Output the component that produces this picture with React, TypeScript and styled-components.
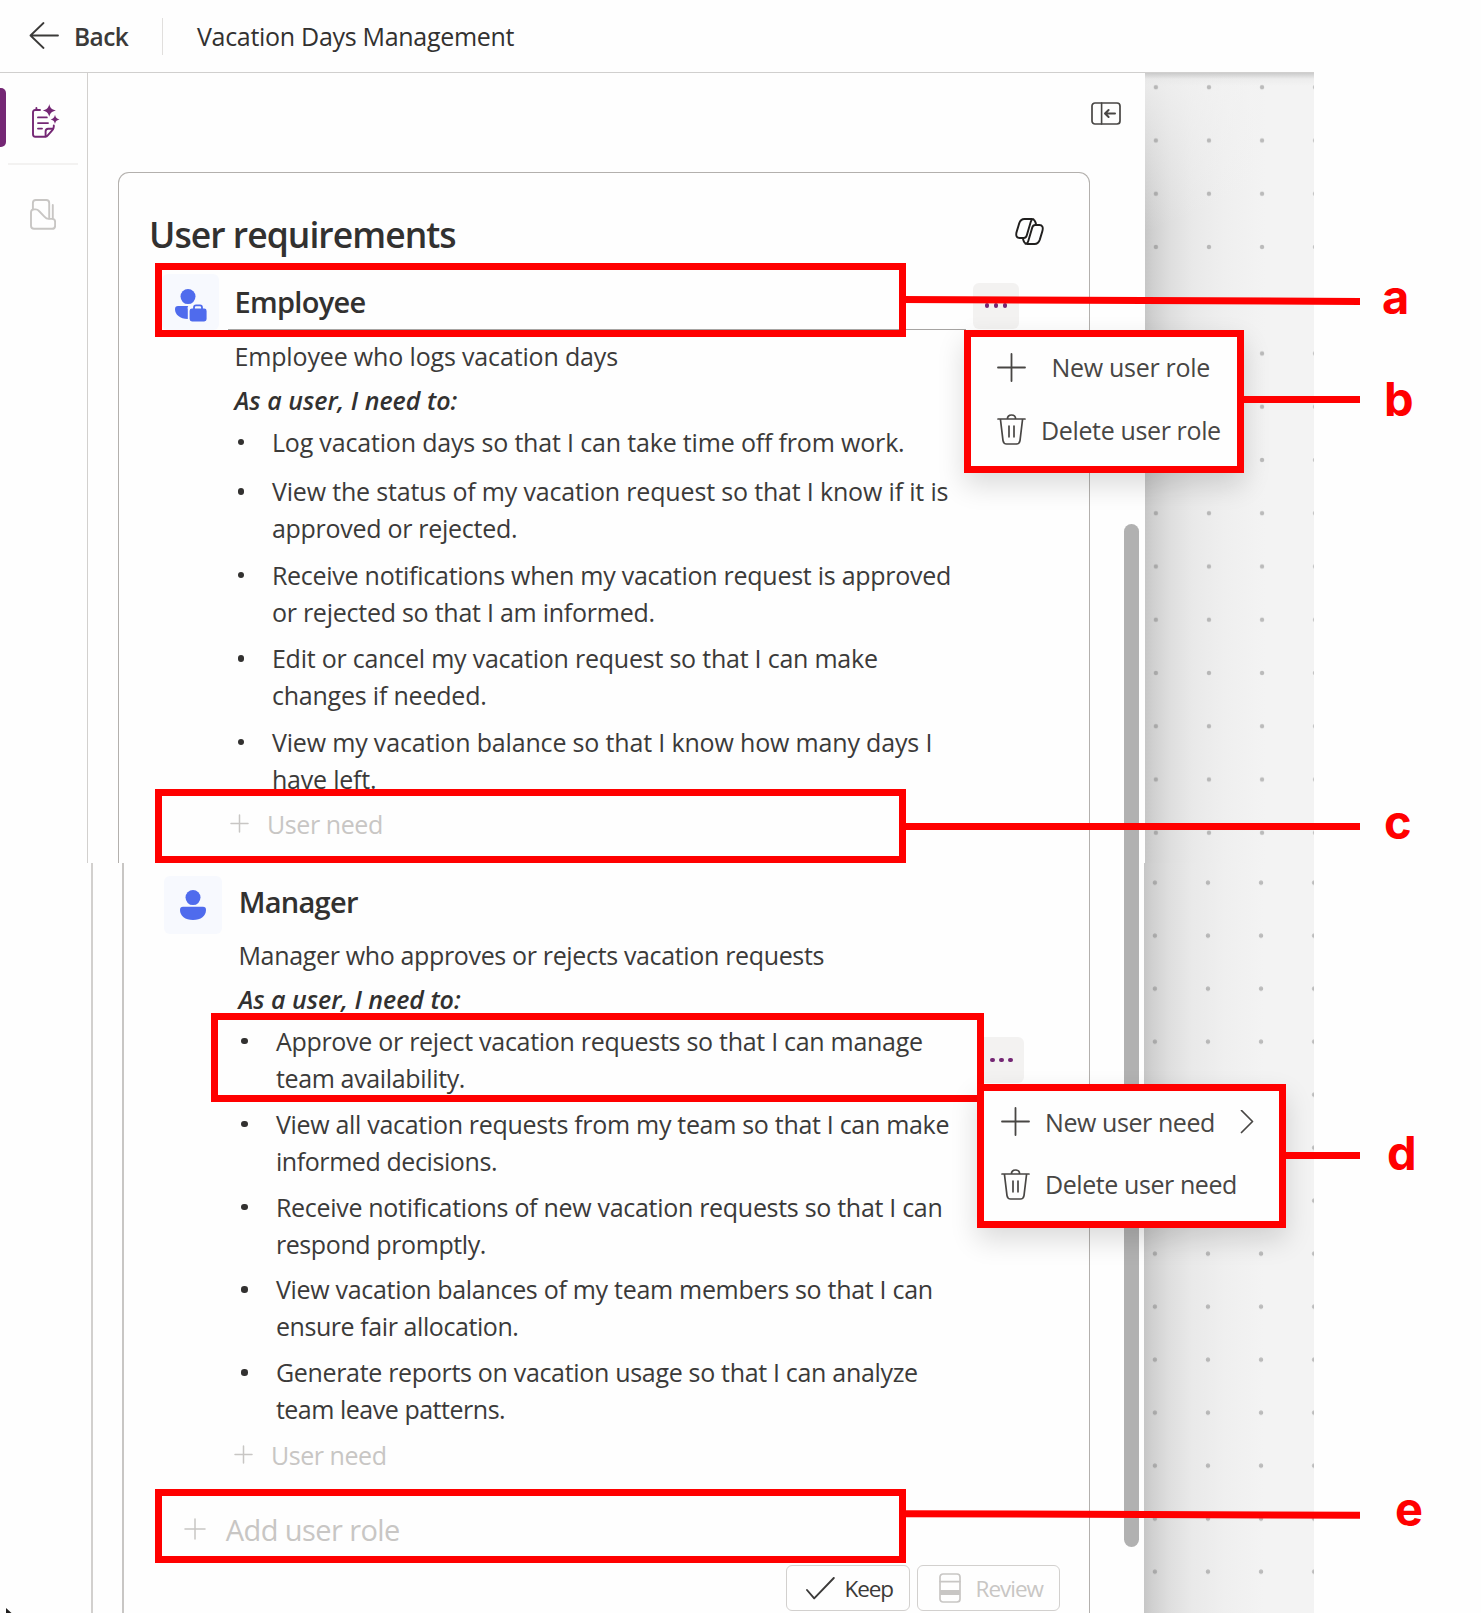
import React from 'react';
import styled, { createGlobalStyle, css } from 'styled-components';

const GlobalStyle = createGlobalStyle`
  *, *::before, *::after { box-sizing: border-box; }
  body { margin: 0; background: #fefefe; }
`;

const RED = '#ff0000';
const INK = '#3b3a39';
const MUTED = '#c8c6c4';

const Page = styled.div`
  position: relative;
  width: 1481px;
  height: 1613px;
  overflow: hidden;
  background: #fefefe;
  color: ${INK};
  font-family: 'Open Sans', 'Noto Sans', sans-serif;
  font-size: 25px;
`;

/* ---------- text ---------- */

const Text = styled.span<{ $track?: number }>`
  display: block;
  white-space: nowrap;
  letter-spacing: ${(p) => p.$track ?? -0.25}px;
`;

/* ---------- header ---------- */

const Header = styled.header`
  display: flex;
  align-items: center;
  width: 1314px;
  height: 73px;
  padding-left: 29px;
  border-bottom: 1px solid #d0cfce;
`;

const BackButton = styled.div`
  display: flex;
  align-items: center;
  gap: 15px;
  width: 133px;
  font-size: 24.5px;
  font-weight: 600;
`;

const HeaderRule = styled.div`
  width: 1px;
  height: 37px;
  margin-right: 34px;
  background: #e1dfdd;
`;

const AppTitle = styled.div`
  color: #323130;
`;

/* ---------- workspace ---------- */

const Slice = styled.section<{ $height: number }>`
  display: flex;
  height: ${(p) => p.$height}px;
`;

const Rail = styled.nav<{ $width: number; $line: number }>`
  flex: none;
  width: ${(p) => p.$width}px;
  border-right: ${(p) => p.$line}px solid #d2d0ce;
`;

const RailItem = styled.div<{ $top: number; $height: number; $pad: number }>`
  display: flex;
  align-items: center;
  gap: 26px;
  height: ${(p) => p.$height}px;
  margin-top: ${(p) => p.$top}px;
  padding-left: ${(p) => p.$pad}px;
`;

const ActiveMark = styled.div`
  width: 6px;
  height: 59px;
  border-radius: 0 5px 5px 0;
  background: #742774;
`;

const RailIcon = styled.div`
  padding-top: 6px;
  line-height: 0;
`;

const RailRule = styled.div`
  width: 70px;
  height: 2px;
  margin: 16px 0 0 8px;
  background: #f3f2f1;
`;

const Panel = styled.div<{ $width: number; $left: number }>`
  flex: none;
  display: flex;
  flex-direction: column;
  width: ${(p) => p.$width}px;
  padding-left: ${(p) => p.$left}px;
`;

const PanelBar = styled.div`
  display: flex;
  justify-content: flex-end;
  flex: none;
  height: 99px;
  padding: 28.5px 24px 0 0;
`;

const Card = styled.div<{ $lower?: boolean }>`
  flex: 1;
  display: flex;
  flex-direction: column;
  border: 1px solid #b3b0ad;
  border-bottom: 0;
  ${(p) =>
    p.$lower
      ? css`
          width: 968px;
          border-top: 0;
          border-left: 2px solid #c8c6c4;
        `
      : css`
          width: 972px;
          border-radius: 11px 11px 0 0;
          padding-top: 35px;
        `}
`;

const TitleRow = styled.div`
  display: flex;
  justify-content: space-between;
  align-items: flex-start;
  height: 66px;
  padding: 0 45px 0 30px;
`;

const Title = styled.h1`
  margin: 0;
  padding-top: 2px;
  font-size: 35.5px;
  font-weight: 600;
  line-height: 48px;
  color: #323130;
`;

const TitleIcon = styled.div`
  padding-top: 10px;
  line-height: 0;
`;

/* ---------- role sections ---------- */

const Role = styled.div<{ $left: number; $top?: number }>`
  padding: ${(p) => p.$top ?? 0}px 0 0 ${(p) => p.$left}px;
`;

const RoleHead = styled.div<{ $height: number }>`
  display: flex;
  height: ${(p) => p.$height}px;
`;

const Avatar = styled.div<{ $width: number; $drop?: number }>`
  flex: none;
  display: flex;
  align-items: center;
  justify-content: center;
  width: ${(p) => p.$width}px;
  padding-top: ${(p) => p.$drop ?? 0}px;
  border-radius: 6px;
  background: #f7f9fe;
`;

const NameField = styled.div<{ $left: number; $lined?: boolean }>`
  width: 738px;
  margin-left: ${(p) => p.$left}px;
  padding: ${(p) => (p.$lined ? '9px 0 0 7px' : '7px 0 0 7px')};
  border-bottom: ${(p) => (p.$lined ? '1px solid #a6a4a2' : '0')};
  font-size: 29px;
  font-weight: 600;
  line-height: 38px;
  color: #323130;
`;

const MoreButton = styled.div<{ $left: number; $top: number }>`
  flex: none;
  display: flex;
  align-items: center;
  justify-content: center;
  gap: 4.5px;
  width: 46px;
  height: 46px;
  margin: ${(p) => p.$top}px 0 0 ${(p) => p.$left}px;
  border-radius: 6px;
  background: #f3f2f1;
`;

const MoreDot = styled.i`
  width: 4.6px;
  height: 4.6px;
  border-radius: 50%;
  background: #742774;
`;

const RoleBody = styled.div<{ $left: number; $top: number }>`
  padding: ${(p) => p.$top}px 0 0 ${(p) => p.$left}px;
`;

const Description = styled.div`
  line-height: 34px;
`;

const Lead = styled.div`
  margin-top: 10px;
  font-style: italic;
  font-weight: 600;
  line-height: 34px;
  color: #323130;
`;

const NeedList = styled.ul<{ $gap: number }>`
  display: flex;
  flex-direction: column;
  gap: ${(p) => p.$gap}px;
  margin: 7px 0 0;
  padding: 0;
  list-style: none;
`;

const NeedItem = styled.li<{ $after?: number }>`
  display: flex;
  align-items: flex-start;
  margin-bottom: ${(p) => p.$after ?? 0}px;
  padding-left: 3px;
  line-height: 37px;

  &::before {
    content: '';
    flex: none;
    width: 6.4px;
    height: 6.4px;
    margin: 15px 28px 0 0;
    border-radius: 50%;
    background: #323130;
  }
`;

const NeedText = styled.div`
  width: 702px;
`;

const AddRow = styled.div<{ $top: number; $left: number; $gap: number; $large?: boolean }>`
  display: flex;
  align-items: center;
  gap: ${(p) => p.$gap}px;
  margin: ${(p) => p.$top}px 0 0 ${(p) => p.$left}px;
  color: ${MUTED};
  font-size: ${(p) => (p.$large ? 29 : 25)}px;
  line-height: ${(p) => (p.$large ? 40 : 34)}px;

  svg {
    margin-top: -1px;
  }
`;

const Footer = styled.div`
  display: flex;
  justify-content: flex-end;
  gap: 7px;
  margin-top: 15px;
  padding-right: 29.5px;
`;

const FooterButton = styled.div<{ $width: number; $left: number; $gap: number; $disabled?: boolean }>`
  display: flex;
  align-items: center;
  gap: ${(p) => p.$gap}px;
  width: ${(p) => p.$width}px;
  height: 46px;
  padding: 1px 0 0 ${(p) => p.$left}px;
  border: 1px solid #d2d0ce;
  border-radius: 6px;
  color: ${(p) => (p.$disabled ? MUTED : INK)};
  font-size: 22.5px;
`;

/* ---------- canvas ---------- */

const Canvas = styled.div<{ $width: number; $y: number; $pitch: number; $top?: boolean }>`
  flex: none;
  width: ${(p) => p.$width}px;
  background:
    ${(p) => (p.$top ? 'linear-gradient(180deg, rgba(190,190,190,.75) 0, rgba(225,225,225,.35) 6px, transparent 13px),' : '')}
    radial-gradient(circle, rgba(110,110,110,.42) 0 1.8px, transparent 2.6px) -15.7px ${(p) => p.$y}px / 53.1px ${(p) => p.$pitch}px,
    ${(p) => (p.$top ? 'linear-gradient(160deg, rgba(243,243,243,.85) 0, rgba(243,243,243,0) 150px),' : '')}
    linear-gradient(90deg, #c6c6c6 0, #d0d0d0 8px, #dedede 25px, #e9e9e9 48px, #efefef 80px, #f3f3f3 120px);
`;

const ScrollThumb = styled.div`
  position: absolute;
  left: 1124px;
  top: 524px;
  width: 15px;
  height: 1023px;
  border-radius: 8px;
  background: #b1b1b1;
`;

/* ---------- menus ---------- */

const Menu = styled.div<{ $x: number; $y: number; $w: number; $h: number; $pad: string }>`
  position: absolute;
  left: ${(p) => p.$x}px;
  top: ${(p) => p.$y}px;
  display: flex;
  flex-direction: column;
  gap: 2.5px;
  width: ${(p) => p.$w}px;
  height: ${(p) => p.$h}px;
  padding: ${(p) => p.$pad};
  border: 7px solid ${RED};
  background: #fefefe;
  box-shadow: 0 12px 26px rgba(0, 0, 0, 0.14);
`;

const MenuItem = styled.div<{ $gap: number }>`
  display: flex;
  align-items: center;
  gap: ${(p) => p.$gap}px;
  height: 60px;
  color: #484644;
`;

const MenuLabel = styled(Text)<{ $w?: number }>`
  width: ${(p) => (p.$w ? `${p.$w}px` : 'auto')};
`;

/* ---------- callouts ---------- */

const Frame = styled.div<{ $x: number; $y: number; $w: number; $h: number }>`
  position: absolute;
  left: ${(p) => p.$x}px;
  top: ${(p) => p.$y}px;
  width: ${(p) => p.$w}px;
  height: ${(p) => p.$h}px;
  border: 7px solid ${RED};
`;

const Connector = styled.div<{ $x: number; $y: number; $slant?: number }>`
  position: absolute;
  left: ${(p) => p.$x}px;
  top: ${(p) => p.$y}px;
  width: ${(p) => 1360 - p.$x}px;
  height: 7px;
  background: ${RED};
  transform: skewY(${(p) => p.$slant ?? 0}deg);
`;

const Letter = styled.div<{ $x: number; $y: number }>`
  position: absolute;
  left: ${(p) => p.$x}px;
  top: ${(p) => p.$y}px;
  color: ${RED};
  font: 700 47px/48px Inter, sans-serif;
`;

const Pointer = styled.svg`
  position: absolute;
  left: 6px;
  top: 1608px;
`;

/* ---------- icons ---------- */

const stroke = (w: number, color: string) => ({
  fill: 'none',
  stroke: color,
  strokeWidth: w,
  strokeLinecap: 'round' as const,
  strokeLinejoin: 'round' as const,
});

const BackArrow = () => (
  <svg width="30" height="28" viewBox="0 0 30 28" {...stroke(1.8, '#3b3a39')}>
    <path d="M29 13.5H1.5M14.5 1L1.5 13.5L14.5 26" />
  </svg>
);

const PlanIcon = () => (
  <svg width="28" height="34" viewBox="0 0 28 34">
    <g {...stroke(1.9, '#742774')}>
      <path d="M8 6H3.2C1.8 6 1 6.8 1 8.2V30.2C1 31.8 1.8 32.7 3.3 32.7H13.4C14.6 32.7 15.2 32.2 16 31.2L20.6 25.8C21.5 24.7 21.8 23.8 21.8 22.6V21.5" />
      <path d="M4.4 4V6M13.6 32.2V27.6C13.6 25.8 14.5 24.8 16.2 24.8H21" />
      <path d="M6 13.4H14.8M6 19.1H16M6 24.6H10" />
    </g>
    <path
      fill="#742774"
      d="M17.3 0C18.2 4 19.3 5.3 23.9 6.4C19.3 7.6 18.2 8.8 17.3 12.8C16.3 8.8 15.2 7.6 10.8 6.4C15.2 5.3 16.3 4 17.3 0ZM23 10.8C23.7 13.7 24.4 14.5 27.6 15.4C24.4 16.3 23.7 17.1 23 20C22.3 17.1 21.6 16.3 18.6 15.4C21.6 14.5 22.3 13.7 23 10.8Z"
    />
  </svg>
);

const FilesIcon = () => (
  <svg width="26" height="31" viewBox="0 0 26 31" {...stroke(1.9, MUTED)}>
    <path d="M2.9 10.5V4C2.9 2 3.9 1 5.8 1H16.3C18.2 1 19.2 2 19.2 4V19.5" />
    <path d="M22.8 6V19.5" />
    <path d="M1 13.5C1 11.4 2 10.4 3.8 10.4H5.8C7.2 10.4 8 10.9 9 12L14.4 17.6C15.8 19.2 16.8 19.9 18.6 19.9H22.2C24.2 19.9 25.1 20.9 25.1 22.8V26.8C25.1 28.8 24.2 29.8 22.2 29.8H4C2 29.8 1 28.8 1 26.8Z" />
  </svg>
);

const CollapseIcon = () => (
  <svg width="30" height="23" viewBox="0 0 30 23">
    <rect x="1" y="1" width="28" height="21" rx="3" {...stroke(1.7, '#484644')} />
    <path d="M10.6 1V22" {...stroke(1.6, '#484644')} />
    <path d="M24 11.5H14.5M17.6 8L14 11.5L17.6 15" {...stroke(2, '#484644')} />
  </svg>
);

const lobe =
  'M21.2 7C20.5 3.2 19.6 1 16.8 1H9.4C6.8 1 5.2 2.4 4.2 5.4L1.7 13.6C.5 17.6 1.7 20 4.6 20H8.8C10.4 20 11.2 19.2 11.7 17.6L15.7 4C16.3 2 17 1.1 18.4 1.1';

const CopilotIcon = () => (
  <svg width="29" height="27" viewBox="0 0 29 27" {...stroke(1.9, '#201f1e')}>
    <path d={lobe} />
    <path d={lobe} transform="rotate(180 14.5 13.5)" />
  </svg>
);

const EmployeeIcon = () => (
  <svg width="32" height="33" viewBox="0 0 32 33" fill="#4f6bed">
    <circle cx="13" cy="7.6" r="7.5" />
    <path d="M3 17H13.2C12.6 18 12.4 19 12.8 20.2V30C5 29.6 0 25.8 0 20.2C0 18.2 1 17 3 17Z" />
    <rect x="14.6" y="19.6" width="17" height="12.8" rx="2.4" />
    <path d="M19 20V18.4C19 17.2 19.7 16.4 21 16.4H25C26.3 16.4 27 17.2 27 18.4V20" fill="none" stroke="#4f6bed" strokeWidth="1.8" />
  </svg>
);

const ManagerIcon = () => (
  <svg width="26" height="30" viewBox="0 0 26 30" fill="#4f6bed">
    <circle cx="13" cy="7.6" r="7.5" />
    <path d="M3 16.8H23C25 16.8 26 18 26 20C26 26 20.8 30 13 30S0 26 0 20C0 18 1 16.8 3 16.8Z" />
  </svg>
);

const PlusIcon = ({ size, color, weight = 1.5 }: { size: number; color: string; weight?: number }) => (
  <svg width={size} height={size} viewBox={`0 0 ${size} ${size}`} {...stroke(weight, color)}>
    <path d={`M${size / 2} 1V${size - 1}M1 ${size / 2}H${size - 1}`} />
  </svg>
);

const TrashIcon = () => (
  <svg width="29" height="31" viewBox="0 0 29 31" {...stroke(1.7, '#484644')}>
    <path d="M1 5H28M10.4 5C10.4 2.4 12 1 14.5 1S18.6 2.4 18.6 5M3.4 5L6 26.6C6.4 29 7.4 30 9.6 30H19.4C21.6 30 22.6 29 23 26.6L25.6 5" />
    <path d="M12 12V22.8M17 12V22.8" />
  </svg>
);

const ChevronIcon = () => (
  <svg width="14" height="24" viewBox="0 0 14 24" {...stroke(1.7, '#484644')}>
    <path d="M1.5 0.5L12.5 11.5L1.5 22.5" />
  </svg>
);

const CheckIcon = () => (
  <svg width="29" height="23" viewBox="0 0 29 23" {...stroke(1.9, INK)}>
    <path d="M1 13L8.2 21.4L27.8 1" />
  </svg>
);

const ReviewIcon = () => (
  <svg width="22" height="30" viewBox="0 0 22 30">
    <rect x="1" y="1" width="20" height="28" rx="3" {...stroke(1.7, MUTED)} />
    <path d="M1 8.6H21" {...stroke(1.6, MUTED)} />
    <rect x="1" y="17" width="20" height="5" fill={MUTED} />
  </svg>
);

const More = ({ left, top }: { left: number; top: number }) => (
  <MoreButton $left={left} $top={top}>
    <MoreDot />
    <MoreDot />
    <MoreDot />
  </MoreButton>
);

/* ---------- data ---------- */

type Line = [text: string, track: number];
type Need = { lines: Line[]; after?: number; active?: boolean };

const employeeNeeds: Need[] = [
  { lines: [['Log vacation days so that I can take time off from work.', -0.17]], after: 3 },
  {
    lines: [
      ['View the status of my vacation request so that I know if it is', -0.17],
      ['approved or rejected.', -0.28],
    ],
  },
  {
    lines: [
      ['Receive notifications when my vacation request is approved', -0.265],
      ['or rejected so that I am informed.', -0.25],
    ],
  },
  {
    lines: [
      ['Edit or cancel my vacation request so that I can make', -0.225],
      ['changes if needed.', -0.2],
    ],
  },
  {
    lines: [
      ['View my vacation balance so that I know how many days I', -0.165],
      ['have left.', -0.2],
    ],
  },
];

const managerNeeds: Need[] = [
  {
    lines: [
      ['Approve or reject vacation requests so that I can manage', -0.287],
      ['team availability.', -0.349],
    ],
    active: true,
  },
  {
    lines: [
      ['View all vacation requests from my team so that I can make', -0.305],
      ['informed decisions.', -0.41],
    ],
  },
  {
    lines: [
      ['Receive notifications of new vacation requests so that I can', -0.295],
      ['respond promptly.', -0.4],
    ],
  },
  {
    lines: [
      ['View vacation balances of my team members so that I can', -0.295],
      ['ensure fair allocation.', -0.42],
    ],
  },
  {
    lines: [
      ['Generate reports on vacation usage so that I can analyze', -0.315],
      ['team leave patterns.', -0.476],
    ],
  },
];

const Needs = ({ items, gap }: { items: Need[]; gap: number }) => (
  <NeedList $gap={gap}>
    {items.map((need) => (
      <NeedItem key={need.lines[0][0]} $after={need.after}>
        <NeedText>
          {need.lines.map(([text, track]) => (
            <Text key={text} $track={track}>
              {text}
            </Text>
          ))}
        </NeedText>
        {need.active && <More left={0.5} top={14} />}
      </NeedItem>
    ))}
  </NeedList>
);

export default function App() {
  return (
    <Page>
      <GlobalStyle />
      <Header>
        <BackButton>
          <BackArrow />
          <Text $track={-0.57}>Back</Text>
        </BackButton>
        <HeaderRule />
        <AppTitle>
          <Text $track={-0.3}>Vacation Days Management</Text>
        </AppTitle>
      </Header>

      <Slice $height={790}>
        <Rail $width={88} $line={1}>
          <RailItem $top={15} $height={59} $pad={0}>
            <ActiveMark />
            <RailIcon>
              <PlanIcon />
            </RailIcon>
          </RailItem>
          <RailRule />
          <RailItem $top={34} $height={31} $pad={30}>
            <FilesIcon />
          </RailItem>
        </Rail>
        <Panel $width={1057} $left={30}>
          <PanelBar>
            <CollapseIcon />
          </PanelBar>
          <Card>
            <TitleRow>
              <Title>
                <Text $track={-0.96}>User requirements</Text>
              </Title>
              <TitleIcon>
                <CopilotIcon />
              </TitleIcon>
            </TitleRow>
            <Role $left={43}>
              <RoleHead $height={56}>
                <Avatar $width={57} $drop={7}>
                  <EmployeeIcon />
                </Avatar>
                <NameField $left={8.5} $lined>
                  <Text $track={-0.7}>Employee</Text>
                </NameField>
                <More left={7.5} top={8.5} />
              </RoleHead>
              <RoleBody $left={72.5} $top={9}>
                <Description>
                  <Text $track={-0.156}>Employee who logs vacation days</Text>
                </Description>
                <Lead>
                  <Text $track={0}>As a user, I need to:</Text>
                </Lead>
                <Needs items={employeeNeeds} gap={9.4} />
                <AddRow $top={9} $left={-4.5} $gap={18}>
                  <PlusIcon size={19} color={MUTED} />
                  <Text $track={-0.42}>User need</Text>
                </AddRow>
              </RoleBody>
            </Role>
          </Card>
        </Panel>
        <Canvas $width={169} $y={-12.4} $pitch={53.25} $top />
      </Slice>

      <Slice $height={750}>
        <Rail $width={93} $line={2} />
        <Panel $width={1051} $left={29}>
          <Card $lower>
            <Role $left={40.3} $top={13}>
              <RoleHead $height={58}>
                <Avatar $width={58}>
                  <ManagerIcon />
                </Avatar>
                <NameField $left={9.5}>
                  <Text $track={-0.745}>Manager</Text>
                </NameField>
              </RoleHead>
              <RoleBody $left={74.2} $top={4}>
                <Description>
                  <Text $track={-0.345}>Manager who approves or rejects vacation requests</Text>
                </Description>
                <Lead>
                  <Text $track={-0.03}>As a user, I need to:</Text>
                </Lead>
                <Needs items={managerNeeds} gap={8.8} />
                <AddRow $top={9.6} $left={-4.5} $gap={18}>
                  <PlusIcon size={19} color={MUTED} />
                  <Text $track={-0.45}>User need</Text>
                </AddRow>
              </RoleBody>
            </Role>
            <AddRow $top={38} $left={60.3} $gap={19.5} $large>
              <PlusIcon size={22} color={MUTED} />
              <Text $track={-0.579}>Add user role</Text>
            </AddRow>
            <Footer>
              <FooterButton $width={124} $left={19.5} $gap={9.5}>
                <CheckIcon />
                <Text $track={-1.1}>Keep</Text>
              </FooterButton>
              <FooterButton $width={143} $left={21.5} $gap={14.5} $disabled>
                <ReviewIcon />
                <Text $track={-1.0}>Review</Text>
              </FooterButton>
            </Footer>
          </Card>
        </Panel>
        <Canvas $width={170} $y={-6.8} $pitch={53} />
      </Slice>

      <ScrollThumb />

      <Frame $x={155} $y={263} $w={751} $h={74} />
      <Frame $x={155} $y={789} $w={751} $h={74} />
      <Frame $x={211} $y={1013} $w={773} $h={89} />
      <Frame $x={155} $y={1489} $w={751} $h={74} />

      <Menu $x={964} $y={330} $w={280} $h={143} $pad="0 0 0 25.5px">
        <MenuItem $gap={26}>
          <PlusIcon size={29} color="#484644" weight={1.8} />
          <MenuLabel $track={-0.3}>New user role</MenuLabel>
        </MenuItem>
        <MenuItem $gap={15.5}>
          <TrashIcon />
          <MenuLabel $track={-0.362}>Delete user role</MenuLabel>
        </MenuItem>
      </Menu>
      <Menu $x={977} $y={1084} $w={309} $h={144} $pad="0.5px 0 0 17px">
        <MenuItem $gap={15}>
          <PlusIcon size={29} color="#484644" weight={1.8} />
          <MenuLabel $track={-0.42} $w={179.5}>
            New user need
          </MenuLabel>
          <ChevronIcon />
        </MenuItem>
        <MenuItem $gap={15}>
          <TrashIcon />
          <MenuLabel $track={-0.42}>Delete user need</MenuLabel>
        </MenuItem>
      </Menu>

      <Connector $x={900} $y={297} $slant={0.23} />
      <Connector $x={1240} $y={396} />
      <Connector $x={900} $y={823} />
      <Connector $x={1280} $y={1152} />
      <Connector $x={900} $y={1511} $slant={0.2} />

      <Letter $x={1382} $y={273}>a</Letter>
      <Letter $x={1384} $y={375}>b</Letter>
      <Letter $x={1384} $y={798}>c</Letter>
      <Letter $x={1387} $y={1129}>d</Letter>
      <Letter $x={1395} $y={1485}>e</Letter>

      <Pointer width="6" height="5" viewBox="0 0 6 5">
        <path d="M0 0L5.5 5H0Z" fill="#201f1e" />
      </Pointer>
    </Page>
  );
}
